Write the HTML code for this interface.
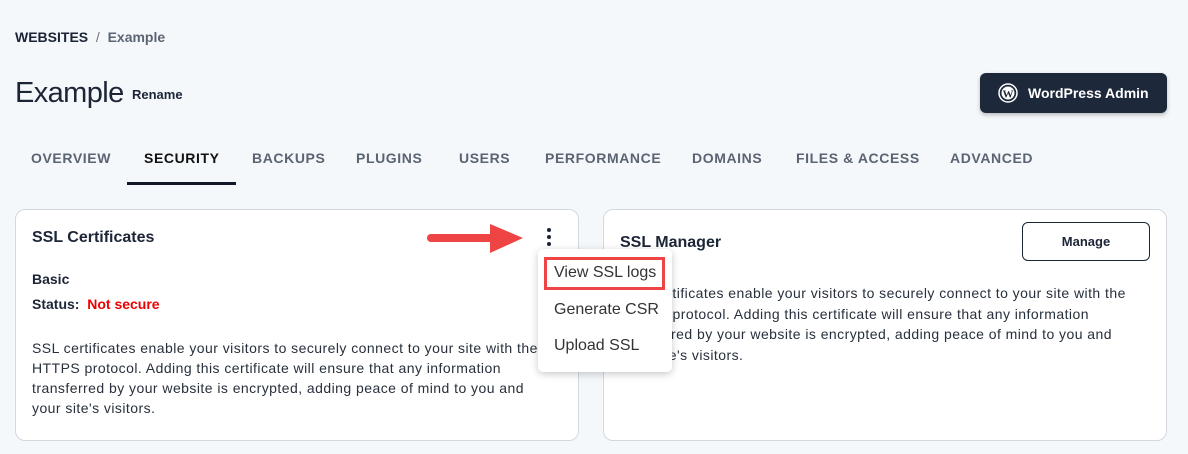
<!DOCTYPE html>
<html><head><style>
*{box-sizing:border-box;margin:0;padding:0}
body{width:1188px;height:454px;background:#f5f8fb;font-family:"Liberation Sans",sans-serif;color:#1b2536;position:relative;overflow:hidden}
.a{position:absolute;white-space:nowrap}
.tab{position:absolute;top:150px;font-size:14px;font-weight:bold;letter-spacing:0.6px;color:#5b6472}
.card{position:absolute;top:209px;width:564px;height:232px;background:#fff;border:1px solid #d4d8de;border-radius:10px}
.p{font-size:14px;line-height:20px;color:#27303c;letter-spacing:0.45px}
</style></head><body>
<div class="a" style="left:15px;top:29px;font-size:14px;font-weight:bold"><span style="color:#1b2536">WEBSITES</span><span style="color:#6b7280;font-weight:normal">&nbsp;&nbsp;/&nbsp;&nbsp;</span><span style="color:#5b6472">Example</span></div>
<div class="a" style="left:15px;top:77px;font-size:29px;letter-spacing:-0.6px">Example</div>
<div class="a" style="left:132px;top:87px;font-size:13px;font-weight:bold">Rename</div>
<div class="a" style="left:980px;top:73px;width:187px;height:40px;background:#1d283a;border-radius:6px;box-shadow:0 2px 4px rgba(0,0,0,.25);color:#fff;font-size:14px;font-weight:bold;line-height:40px;padding-left:48px">WordPress Admin
<svg style="position:absolute;left:18px;top:10px" width="20" height="20" viewBox="0 0 20 20"><circle cx="10" cy="10" r="9" fill="none" stroke="#fff" stroke-width="1.5"/><circle cx="10" cy="10" r="6.5" fill="#fff"/><text x="10" y="14.5" font-size="11" font-weight="bold" text-anchor="middle" fill="#1d283a" font-family="Liberation Serif">W</text></svg></div>
<div class="tab" style="left:31px">OVERVIEW</div>
<div class="tab" style="left:144px;color:#111">SECURITY</div>
<div class="a" style="left:127px;top:182px;width:109px;height:3px;background:#111827"></div>
<div class="tab" style="left:252px">BACKUPS</div>
<div class="tab" style="left:356px">PLUGINS</div>
<div class="tab" style="left:459px">USERS</div>
<div class="tab" style="left:545px">PERFORMANCE</div>
<div class="tab" style="left:692px">DOMAINS</div>
<div class="tab" style="left:796px">FILES &amp; ACCESS</div>
<div class="tab" style="left:950px">ADVANCED</div>

<div class="card" style="left:15px">
<div class="a" style="left:16px;top:19px;font-size:16px;font-weight:bold">SSL Certificates</div>
<div class="a" style="left:16px;top:61px;font-size:14px;font-weight:bold">Basic</div>
<div class="a" style="left:16px;top:86px;font-size:14px;font-weight:bold">Status: &nbsp;<span style="color:#e00">Not secure</span></div>
<div class="a p" style="left:16px;top:128px">SSL certificates enable your visitors to securely connect to your site with the<br>HTTPS protocol. Adding this certificate will ensure that any information<br>transferred by your website is encrypted, adding peace of mind to you and<br>your site's visitors.</div>
<div class="a" style="left:531px;top:18px;width:4px;height:18px"><div style="width:4px;height:4px;border-radius:2px;background:#1b2536;margin-bottom:3px"></div><div style="width:4px;height:4px;border-radius:2px;background:#1b2536;margin-bottom:3px"></div><div style="width:4px;height:4px;border-radius:2px;background:#1b2536"></div></div>
</div>

<div class="card" style="left:603px">
<div class="a" style="left:16px;top:24px;font-size:16px;font-weight:bold">SSL Manager</div>
<div class="a" style="left:418px;top:12px;width:128px;height:39px;border:1px solid #1b2536;border-radius:6px;font-size:13px;font-weight:bold;text-align:center;line-height:37px">Manage</div>
<div class="a p" style="left:16px;top:73px;line-height:20.5px">SSL certificates enable your visitors to securely connect to your site with the<br>HTTPS protocol. Adding this certificate will ensure that any information<br>transferred by your website is encrypted, adding peace of mind to you and<br>your site's visitors.</div>
</div>

<svg class="a" style="left:424px;top:222px" width="104" height="34" viewBox="0 0 104 34"><line x1="7" y1="16" x2="72" y2="16" stroke="#ef4444" stroke-width="8" stroke-linecap="round"/><polygon points="66,2 99,16 66,31" fill="#ef4444"/></svg>
<div class="a" style="left:538px;top:249px;width:134px;height:123px;background:#fff;border-radius:5px;box-shadow:0 2px 8px rgba(0,0,0,.22);font-size:16px;color:#333">
<div class="a" style="left:6px;top:8px;width:121px;height:33px;border:3px solid #ef4444"></div>
<div class="a" style="left:16px;top:15px">View SSL logs</div>
<div class="a" style="left:16px;top:52px">Generate CSR</div>
<div class="a" style="left:16px;top:88px">Upload SSL</div>
</div>
</body></html>
